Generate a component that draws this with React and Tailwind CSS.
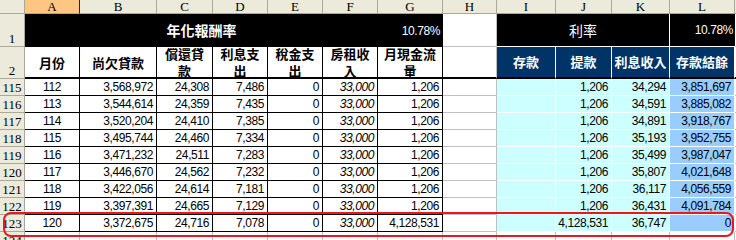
const COLS = ['A', 'B', 'C', 'D', 'E', 'F', 'G', 'H', 'I', 'J', 'K', 'L']

// A..G, H (blank), I..L
const ROWS = [
  [115, '112', '3,568,972', '24,308', '7,486', '0', '33,000', '1,206', '', '', '1,206', '34,294', '3,851,697'],
  [116, '113', '3,544,614', '24,359', '7,435', '0', '33,000', '1,206', '', '', '1,206', '34,591', '3,885,082'],
  [117, '114', '3,520,204', '24,410', '7,385', '0', '33,000', '1,206', '', '', '1,206', '34,891', '3,918,767'],
  [118, '115', '3,495,744', '24,460', '7,334', '0', '33,000', '1,206', '', '', '1,206', '35,193', '3,952,755'],
  [119, '116', '3,471,232', '24,511', '7,283', '0', '33,000', '1,206', '', '', '1,206', '35,499', '3,987,047'],
  [120, '117', '3,446,670', '24,562', '7,232', '0', '33,000', '1,206', '', '', '1,206', '35,807', '4,021,648'],
  [121, '118', '3,422,056', '24,614', '7,181', '0', '33,000', '1,206', '', '', '1,206', '36,117', '4,056,559'],
  [122, '119', '3,397,391', '24,665', '7,129', '0', '33,000', '1,206', '', '', '1,206', '36,431', '4,091,784'],
  [123, '120', '3,372,675', '24,716', '7,078', '0', '33,000', '4,128,531', '', '', '4,128,531', '36,747', '0'],
]

const serif = "font-['Liberation_Serif',serif]"
const num = "font-['Liberation_Sans',Arial,sans-serif] text-[12px] tracking-[-0.4px]"
const cjk = "font-['Noto_Sans_CJK_TC','Noto_Sans',sans-serif]"

function RowHead({ n }) {
  return (
    <div
      className={`flex items-end justify-center border-r border-b border-[#aca899] bg-[#ebeadb] text-[13px] leading-[15px] text-black ${serif}`}
    >
      {n}
    </div>
  )
}

function Header({ children }) {
  return (
    <div
      className={`flex items-center justify-center whitespace-nowrap border-r border-black border-b-2 border-b-black bg-white text-center text-[13px] font-bold leading-[17px] text-black ${cjk}`}
    >
      <span>{children}</span>
    </div>
  )
}

function NavyHeader({ children }) {
  return (
    <div
      className={`flex items-center justify-center whitespace-nowrap border-r border-white border-b-2 border-b-black bg-[#003366] text-[13px] font-bold text-white ${cjk}`}
    >
      {children}
    </div>
  )
}

function cellClass(i) {
  if (i < 7) return 'border-r border-b border-black bg-white text-black'
  if (i === 7) return 'border-r border-b border-[#c0c0c0] bg-white'
  if (i === 11) return 'border-r border-b border-white bg-[#99ccff] text-black'
  return 'border-r border-b border-white bg-[#ccffff] text-black'
}

export default function App() {
  return (
    <div className="relative h-[240px] w-[736px] overflow-hidden bg-white">
      <div className="grid grid-cols-[25px_55px_77px_56px_55px_55px_55px_65px_54px_59px_56px_58px_65px_1px] grid-rows-[14px_33px_32px_repeat(10,17px)]">
        {/* column letters */}
        <div className="border-r border-b border-[#aca899] bg-[#ebeadb]" />
        {COLS.map((c) => (
          <div
            key={c}
            className={`flex items-center justify-center border-b text-[13px] leading-[13px] text-black ${serif} ${
              c === 'A'
                ? 'border-r border-r-[#0a246a] border-b-[#aca899] bg-[#fdc683]'
                : 'border-r border-[#aca899] bg-[#ebeadb]'
            }`}
          >
            {c}
          </div>
        ))}
        <div className="border-b border-[#aca899] bg-[#ebeadb]" />

        {/* row 1 */}
        <RowHead n="1" />
        <div
          className={`col-span-6 flex items-center justify-center bg-black text-[14px] font-bold text-white ${cjk}`}
        >
          年化報酬率
        </div>
        <div
          className={`flex items-center justify-end border-r border-black bg-black pr-[2px] text-white ${num}`}
        >
          10.78%
        </div>
        <div className="border-r border-b border-[#c0c0c0] bg-white" />
        <div
          className={`col-span-3 flex items-center justify-center border-r border-b border-white bg-black text-[14px] text-white ${cjk}`}
        >
          利率
        </div>
        <div
          className={`flex items-center justify-end border-b border-white bg-black pr-[2px] text-white ${num}`}
        >
          10.78%
        </div>
        <div className="border-b border-[#c0c0c0]" />

        {/* row 2 */}
        <RowHead n="2" />
        <Header>月份</Header>
        <Header>尚欠貸款</Header>
        <Header>
          償還貸
          <br />款
        </Header>
        <Header>
          利息支
          <br />出
        </Header>
        <Header>
          稅金支
          <br />出
        </Header>
        <Header>
          房租收
          <br />入
        </Header>
        <Header>
          月現金流
          <br />量
        </Header>
        <div className="border-r border-[#c0c0c0] border-b-2 border-b-black bg-white" />
        <NavyHeader>存款</NavyHeader>
        <NavyHeader>提款</NavyHeader>
        <NavyHeader>利息收入</NavyHeader>
        <NavyHeader>存款結餘</NavyHeader>
        <div className="border-b-2 border-b-black" />

        {/* data rows */}
        {ROWS.map(([n, ...cells]) => [
          <RowHead key={`h${n}`} n={n} />,
          ...cells.map((v, i) => (
            <div
              key={`${n}-${i}`}
              className={`flex items-end pb-[1px] leading-[14px] ${
                i === 0 ? 'justify-center' : 'justify-end pr-[3px]'
              } ${i === 5 ? 'italic' : ''} ${cellClass(i)} ${num}`}
            >
              {v}
            </div>
          )),
          <div key={`f${n}`} className="border-b border-[#c0c0c0]" />,
        ])}

        {/* row 124, cut off */}
        <RowHead n="124" />
        {COLS.map((c) => (
          <div key={`r124${c}`} className="border-r border-[#c0c0c0] bg-white" />
        ))}
        <div />
      </div>

      {/* red highlight around the last row */}
      <div className="pointer-events-none absolute left-[3px] top-[212px] h-[25px] w-[731px] rounded-[8px] border-2 border-[#e5191e]" />
    </div>
  )
}
